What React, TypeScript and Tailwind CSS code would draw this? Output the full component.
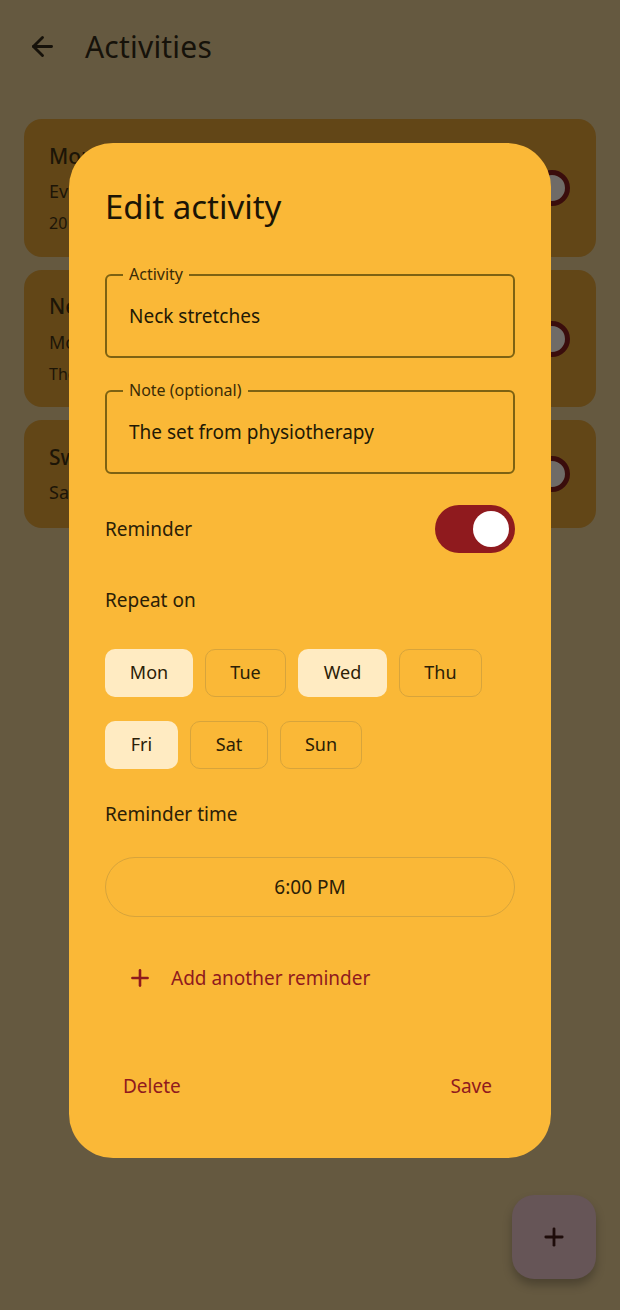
import { ArrowLeft, Plus } from 'lucide-react';

const activities = [
  { title: "Morning walk", sub: "Every day", extra: "20 min", h: "h-[138px]" },
  { title: "Neck stretches", sub: "Mon, Wed, Fri", extra: "The set from physiotherapy", h: "h-[137px]" },
  { title: "Swimming", sub: "Sat", extra: "", h: "h-[108px]" },
];

const days = [
  [
    { d: "Mon", on: true, w: "w-[88px]" },
    { d: "Tue", on: false, w: "w-[81px]" },
    { d: "Wed", on: true, w: "w-[89px]" },
    { d: "Thu", on: false, w: "w-[83px]" },
  ],
  [
    { d: "Fri", on: true, w: "w-[73px]" },
    { d: "Sat", on: false, w: "w-[78px]" },
    { d: "Sun", on: false, w: "w-[82px]" },
  ],
];

function OutlinedField({ label, value }: { label: string; value: string }) {
  return (
    <div className="relative h-[84px] rounded-[6px] border-2 border-[#7d6212] flex items-center px-[22px]">
      <span className="absolute -top-[13px] left-[16px] px-[6px] bg-[#fab837] text-[16px] leading-[22px] text-[#3a2c06]">
        {label}
      </span>
      <span className="text-[19px] text-[#221905]">{value}</span>
    </div>
  );
}

export default function App() {
  return (
    <div
      className="relative w-[620px] h-[1310px] overflow-hidden bg-[#655940]"
      style={{ fontFamily: '"Noto Sans", "Open Sans", sans-serif' }}
    >
      {/* Page underneath the scrim */}
      <div className="flex items-center h-[92px] pl-[27px] gap-[27px] text-[#16120a]">
        <ArrowLeft className="w-[31px] h-[31px]" strokeWidth={2.2} />
        <span className="text-[30px] tracking-[0.2px]">Activities</span>
      </div>
      <div className="flex flex-col gap-[13px] px-[24px] pt-[27px]">
        {activities.map((a) => (
          <div key={a.title} className={`${a.h} rounded-[18px] bg-[#624617] flex items-center justify-between pl-[25px] pr-[26px]`}>
            <div className="flex flex-col gap-[6px] whitespace-nowrap text-[#1c1507]">
              <span className="text-[21px] font-medium">{a.title}</span>
              <span className="text-[18px]">{a.sub}</span>
              {a.extra && <span className="text-[16px]">{a.extra}</span>}
            </div>
            <div className="w-[36px] h-[36px] rounded-full bg-[#6f6b67] border-[5px] border-[#3a0d0c]" />
          </div>
        ))}
      </div>

      {/* FAB */}
      <div className="absolute left-[512px] top-[1195px] w-[84px] h-[84px] rounded-[22px] bg-[#665557] shadow-[0_6px_10px_rgba(0,0,0,0.25)] flex items-center justify-center text-[#1e0c0a]">
        <Plus className="w-[28px] h-[28px]" strokeWidth={2.4} />
      </div>

      {/* Dialog */}
      <div className="absolute left-[69px] top-[143px] w-[482px] h-[1015px] rounded-[44px] bg-[#fab837] px-[36px] pt-[42px] flex flex-col text-[#221905]">
        <h1 className="text-[33px] leading-[44px] text-[#1c1505]">Edit activity</h1>
        <div className="mt-[45px] flex flex-col gap-[32px]">
          <OutlinedField label="Activity" value="Neck stretches" />
          <OutlinedField label="Note (optional)" value="The set from physiotherapy" />
        </div>

        <div className="mt-[31px] flex items-center justify-between h-[48px]">
          <span className="text-[19px] text-[#2b2006]">Reminder</span>
          <div className="w-[80px] h-[48px] rounded-full bg-[#8f1a1e] flex items-center justify-end pr-[6px]">
            <div className="w-[36px] h-[36px] rounded-full bg-white" />
          </div>
        </div>

        <div className="mt-[33px] text-[19px] text-[#2b2006]">Repeat on</div>

        <div className="mt-[34px] flex flex-col gap-[24px]">
          {days.map((row, i) => (
            <div key={i} className="flex gap-[12px]">
              {row.map((c) =>
                c.on ? (
                  <div key={c.d} className={`${c.w} h-[48px] rounded-[10px] bg-[#ffebc2] flex items-center justify-center text-[18px] text-[#2b2006]`}>
                    {c.d}
                  </div>
                ) : (
                  <div key={c.d} className={`${c.w} h-[48px] rounded-[10px] border border-[#d7a43b] flex items-center justify-center text-[18px] text-[#2b2006]`}>
                    {c.d}
                  </div>
                )
              )}
            </div>
          ))}
        </div>

        <div className="mt-[31px] text-[19px] text-[#2b2006]">Reminder time</div>

        <div className="mt-[29px] h-[60px] rounded-full border border-[#d7a43b] flex items-center justify-center text-[19px] text-[#2b2006]">
          6:00 PM
        </div>

        <div className="mt-[45px] flex items-center gap-[18px] pl-[22px] h-[32px] text-[#8f1a1e]">
          <Plus className="w-[26px] h-[26px]" strokeWidth={2.4} />
          <span className="text-[19px]">Add another reminder</span>
        </div>

        <div className="mt-[78px] flex items-center justify-between pl-[18px] pr-[23px] text-[19px] text-[#8f1a1e]">
          <span>Delete</span>
          <span>Save</span>
        </div>
      </div>
    </div>
  );
}
